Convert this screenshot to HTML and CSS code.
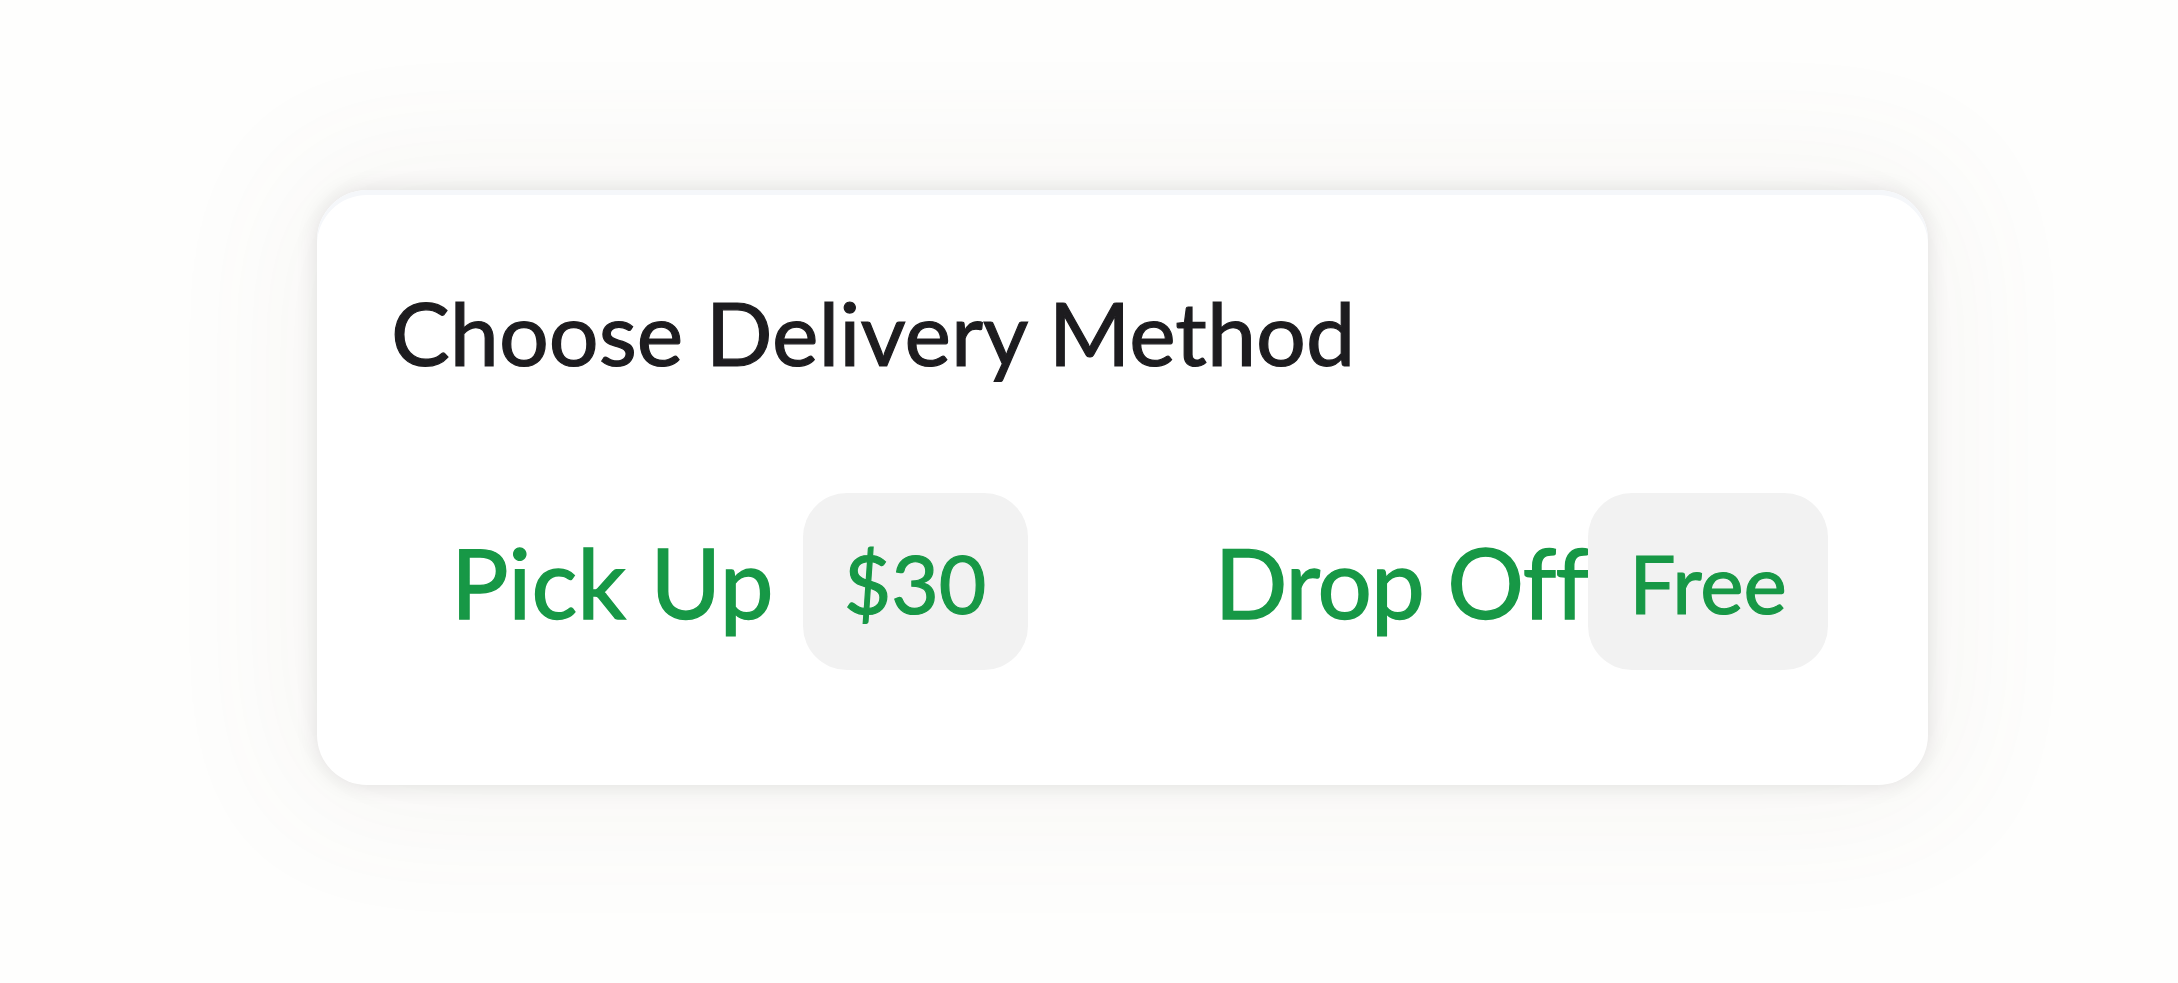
FILE: index.html
```html
<!DOCTYPE html>
<html lang="en">
<head>
  <meta charset="UTF-8" />
  <title>Delivery Method</title>
  <link rel="stylesheet" href="styles.css">
</head>
<body>

  <!-- Delivery card -->
  <section class="card">
    <h2 class="card-title">Choose Delivery Method</h2>

    <div class="methods">
      <div class="method">
        <span class="method-name">Pick Up</span>
        <span class="price">$30</span>
      </div>
      <div class="method method-tight">
        <span class="method-name">Drop Off</span>
        <span class="price price-wide">Free</span>
      </div>
    </div>
  </section>

</body>
</html>
```

FILE: styles.css
```css
html, body {
  height: 100%;
}
body {
  box-sizing: border-box;
  margin: 0;
  padding: 190px 0 0 317px;
  background-color: #fefefd;
  font-family: Lato, "Open Sans", sans-serif;
}
.card {
  box-sizing: border-box;
  width: 1611px;
  height: 595px;
  padding: 98px 0 0 74px;
  background: white;
  border-radius: 50px;
  box-shadow: inset 0 5px 0 #f5f7fa, 0 0 22px rgba(0,0,0,0.11), 0 0 140px 30px rgba(110,90,70,0.05);
}
.card-title {
  margin: 0;
  font-size: 88px;
  font-weight: 400;
  line-height: 1;
  color: #1d1c1f;
  -webkit-text-stroke: 1.2px #1d1c1f;
}
.methods {
  display: flex;
  align-items: center;
  margin: 117px 0 0 60px;
}
.method {
  display: flex;
  align-items: center;
  gap: 29px;
}
.method + .method {
  margin-left: 187px;
}
.method-tight {
  gap: 0;
}
.method-name {
  font-size: 96px;
  color: #179846;
  -webkit-text-stroke: 1.4px #179846;
}
.method-tight .method-name {
  letter-spacing: -1px;
}
.price {
  box-sizing: border-box;
  width: 225px;
  height: 177px;
  display: flex;
  align-items: center;
  justify-content: center;
  background: #f2f2f2;
  border-radius: 44px;
  font-size: 82px;
  color: #179846;
  -webkit-text-stroke: 1.2px #179846;
}
.price-wide {
  width: 240px;
}
```
